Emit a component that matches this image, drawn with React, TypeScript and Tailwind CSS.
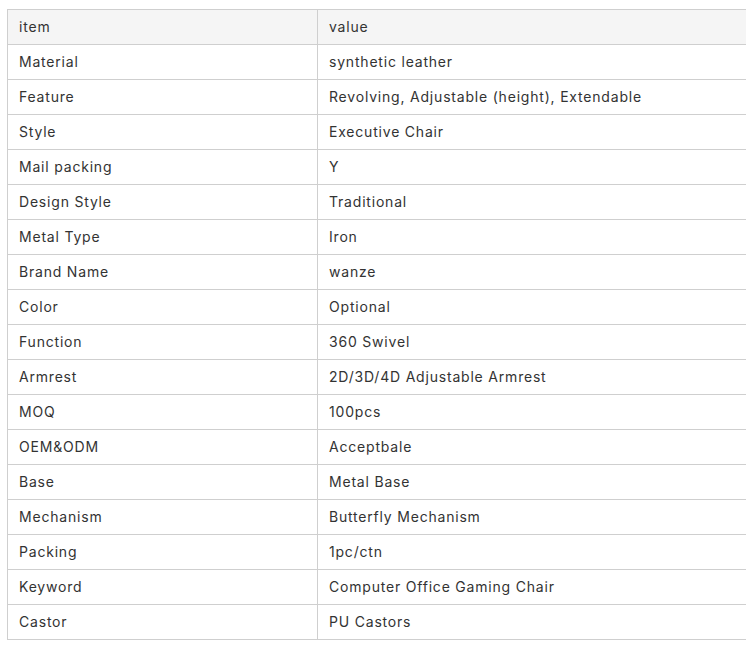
const rows: [string, string][] = [
  ["Material", "synthetic leather"],
  ["Feature", "Revolving, Adjustable (height), Extendable"],
  ["Style", "Executive Chair"],
  ["Mail packing", "Y"],
  ["Design Style", "Traditional"],
  ["Metal Type", "Iron"],
  ["Brand Name", "wanze"],
  ["Color", "Optional"],
  ["Function", "360 Swivel"],
  ["Armrest", "2D/3D/4D Adjustable Armrest"],
  ["MOQ", "100pcs"],
  ["OEM&ODM", "Acceptbale"],
  ["Base", "Metal Base"],
  ["Mechanism", "Butterfly Mechanism"],
  ["Packing", "1pc/ctn"],
  ["Keyword", "Computer Office Gaming Chair"],
  ["Castor", "PU Castors"],
];

export default function App() {
  return (
    <div className="bg-white w-[756px] h-[649px] pt-[9px] pl-[7px]" style={{ fontFamily: "Inter, 'Noto Sans', sans-serif" }}>
      <div className="w-[739px] border-l border-t border-[#cfcfcf] text-[14px] tracking-[0.8px] text-[#333333]">
        <div className="flex h-[35px] bg-[#f5f5f5] border-b border-[#cfcfcf]">
          <div className="w-[310px] border-r border-[#cfcfcf] pl-[11px] pb-[2px] flex items-center">item</div>
          <div className="flex-1 pl-[11px] pb-[2px] flex items-center">value</div>
        </div>
        {rows.map(([k, v]) => (
          <div key={k} className="flex h-[35px] border-b border-[#cfcfcf]">
            <div className="w-[310px] border-r border-[#cfcfcf] pl-[11px] pb-[2px] flex items-center">{k}</div>
            <div className="flex-1 pl-[11px] pb-[2px] flex items-center">{v}</div>
          </div>
        ))}
      </div>
    </div>
  );
}
